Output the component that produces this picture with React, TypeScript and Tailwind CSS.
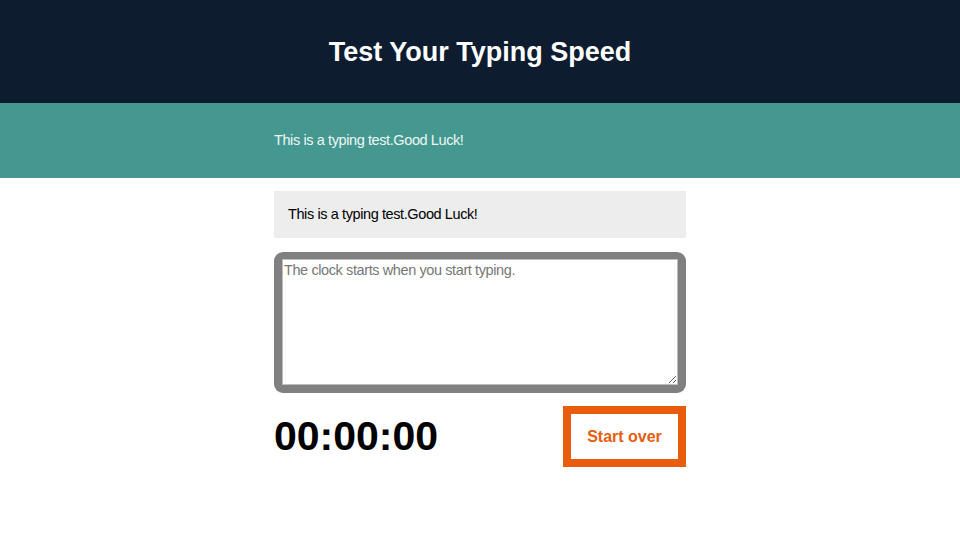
import React from "react";

export default function App() {
  return (
    <div className="min-h-[540px] bg-white" style={{ fontFamily: '"Liberation Sans", Arial, sans-serif' }}>
      <header className="h-[103px] bg-[#0e1c30] flex items-center justify-center pt-[2px]">
        <h1 className="text-[27px] font-bold text-white leading-none">Test Your Typing Speed</h1>
      </header>
      <div className="h-[75px] bg-[#44988f] flex items-center">
        <div className="w-[412px] mx-auto">
          <p className="text-[14.5px] tracking-[-0.4px] text-[#eef7f5]">This is a typing test.Good Luck!</p>
        </div>
      </div>
      <main className="w-[412px] mx-auto pt-[13px]">
        <div className="h-[47px] bg-[#ededed] flex items-center px-[14px]">
          <p className="text-[14.5px] tracking-[-0.4px] text-black">This is a typing test.Good Luck!</p>
        </div>
        <div className="mt-[14px] h-[141px] bg-[#808080] rounded-[9px] pt-[7px] pl-[8px] pr-[8px] pb-[8px] flex">
          <textarea
            className="flex-1 bg-white border border-[#bdbdbd] outline-none text-[14.5px] tracking-[-0.4px] px-[1px] py-0 text-black placeholder:text-[#777]"
            placeholder="The clock starts when you start typing."
          />
        </div>
        <div className="mt-[13px] flex items-center justify-between">
          <div className="text-[41px] font-bold text-black leading-none">00:00:00</div>
          <button className="h-[61px] w-[123px] border-[8px] border-[#e85d0d] bg-white text-[#e85d0d] text-[16px] font-bold">
            Start over
          </button>
        </div>
      </main>
    </div>
  );
}
